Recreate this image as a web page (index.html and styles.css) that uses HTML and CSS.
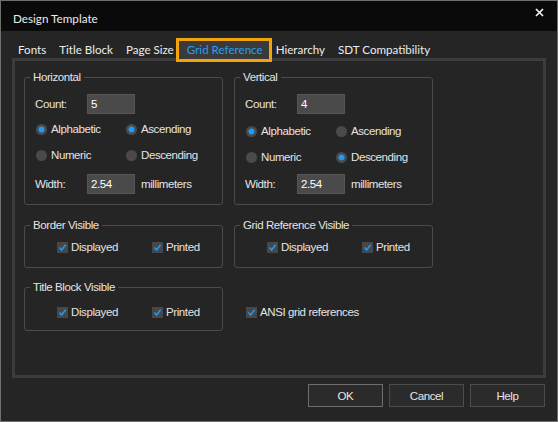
FILE: index.html
```html
<!DOCTYPE html>
<html lang="en">
<head>
    <meta charset="UTF-8">
    <title>Design Template</title>
    <link rel="stylesheet" href="styles.css">
</head>
<body>
    <div class="dialog">
        <div class="titlebar">
            <span class="title">Design Template</span>
            <svg class="close" width="9" height="9" viewBox="0 0 9 9">
                <path d="M1 1 L8 8 M8 1 L1 8" stroke="#f2f2f2" stroke-width="1.7"/>
            </svg>
        </div>

        <div class="tabs">
            <span class="tab">Fonts</span>
            <span class="tab">Title Block</span>
            <span class="tab">Page Size</span>
            <span class="tab active">Grid Reference</span>
            <span class="tab">Hierarchy</span>
            <span class="tab">SDT Compatibility</span>
        </div>

        <div class="panel">
            <div class="grid">
                <fieldset class="group axis">
                    <legend>Horizontal</legend>
                    <div class="field row-count">
                        <span class="lbl">Count:</span>
                        <span class="input">5</span>
                    </div>
                    <div class="options row-opt1">
                        <span class="radio checked">Alphabetic</span>
                        <span class="radio checked">Ascending</span>
                    </div>
                    <div class="options row-opt2">
                        <span class="radio">Numeric</span>
                        <span class="radio">Descending</span>
                    </div>
                    <div class="field row-width">
                        <span class="lbl">Width:</span>
                        <span class="input">2.54</span>
                        <span class="unit">millimeters</span>
                    </div>
                </fieldset>

                <fieldset class="group axis shift">
                    <legend>Vertical</legend>
                    <div class="field row-count">
                        <span class="lbl">Count:</span>
                        <span class="input">4</span>
                    </div>
                    <div class="options row-opt1">
                        <span class="radio checked">Alphabetic</span>
                        <span class="radio">Ascending</span>
                    </div>
                    <div class="options row-opt2">
                        <span class="radio">Numeric</span>
                        <span class="radio checked">Descending</span>
                    </div>
                    <div class="field row-width">
                        <span class="lbl">Width:</span>
                        <span class="input">2.54</span>
                        <span class="unit">millimeters</span>
                    </div>
                </fieldset>

                <fieldset class="group vis">
                    <legend>Border Visible</legend>
                    <div class="checks">
                        <span class="check"><svg viewBox="0 0 11 11"><path d="M2.5 5.5 L4.6 8 L8.6 2.8"/></svg>Displayed</span>
                        <span class="check"><svg viewBox="0 0 11 11"><path d="M2.5 5.5 L4.6 8 L8.6 2.8"/></svg>Printed</span>
                    </div>
                </fieldset>

                <fieldset class="group vis">
                    <legend>Grid Reference Visible</legend>
                    <div class="checks">
                        <span class="check"><svg viewBox="0 0 11 11"><path d="M2.5 5.5 L4.6 8 L8.6 2.8"/></svg>Displayed</span>
                        <span class="check"><svg viewBox="0 0 11 11"><path d="M2.5 5.5 L4.6 8 L8.6 2.8"/></svg>Printed</span>
                    </div>
                </fieldset>

                <fieldset class="group tb">
                    <legend>Title Block Visible</legend>
                    <div class="checks">
                        <span class="check"><svg viewBox="0 0 11 11"><path d="M2.5 5.5 L4.6 8 L8.6 2.8"/></svg>Displayed</span>
                        <span class="check"><svg viewBox="0 0 11 11"><path d="M2.5 5.5 L4.6 8 L8.6 2.8"/></svg>Printed</span>
                    </div>
                </fieldset>

                <div class="ansi">
                    <span class="check"><svg viewBox="0 0 11 11"><path d="M2.5 5.5 L4.6 8 L8.6 2.8"/></svg>ANSI grid references</span>
                </div>
            </div>
        </div>

        <div class="buttons">
            <button class="btn default">OK</button>
            <button class="btn">Cancel</button>
            <button class="btn">Help</button>
        </div>
    </div>
</body>
</html>
```

FILE: styles.css
```css
body {
    margin: 0;
    background-color: #252525;
    font-family: "Liberation Sans", Arial, sans-serif;
    font-size: 11.5px;
    letter-spacing: -0.4px;
    color: #e4e4e4;
}
.dialog {
    width: 558px;
    height: 422px;
    box-sizing: border-box;
    border: 1px solid #6f6f6f;
    background-color: #252525;
    display: flex;
    flex-direction: column;
}
.titlebar {
    height: 30px;
    flex: none;
    background-color: #0a0a0a;
    display: flex;
    align-items: flex-start;
    justify-content: space-between;
    padding: 0 13px 0 12px;
    font-family: Lato, "Noto Sans", sans-serif;
    font-size: 11.7px;
    letter-spacing: 0;
    color: #ececec;
}
.title {
    padding-top: 9px;
    line-height: 17px;
}
.close {
    margin-top: 7px;
}
.tabs {
    height: 17px;
    flex: none;
    display: flex;
    gap: 13px;
    padding: 10px 0 0 17px;
    font-family: Lato, "Noto Sans", sans-serif;
    font-size: 11.6px;
    letter-spacing: 0;
    color: #ececec;
}
.tab {
    height: 18px;
    line-height: 18px;
    white-space: nowrap;
}
.tab.active {
    position: relative;
    z-index: 1;
    padding: 0 6px 0 8px;
    margin: 0 -6px 0 -8px;
    background-color: #3a3a3a;
    color: #2b9ef2;
    outline: 3px solid #f2a40c;
}
.panel {
    height: 320px;
    flex: none;
    box-sizing: border-box;
    margin: 0 11px;
    border: 3px solid #3c3c3c;
    padding: 9px 0 0 9px;
}
.grid {
    display: grid;
    grid-template-columns: 199px 199px;
    column-gap: 11px;
    row-gap: 12px;
    align-items: start;
}
.group {
    margin: 0;
    min-width: 0;
    padding: 0 0 10px 10px;
    border: 1px solid #4b4b4b;
    border-radius: 3px;
}
.group legend {
    margin-left: -5px;
    padding: 0 3px;
    line-height: 14px;
    color: #e4e4e4;
}
.field {
    display: flex;
    align-items: center;
    height: 20px;
}
.lbl {
    width: 52px;
}
.input {
    width: 48px;
    height: 20px;
    box-sizing: border-box;
    background-color: #4a4a4a;
    border: 1px solid #565656;
    padding-left: 3px;
    line-height: 18px;
    color: #ffffff;
}
.unit {
    margin-left: 6px;
    white-space: nowrap;
}
.options {
    display: grid;
    grid-template-columns: 90px auto;
    height: 16px;
    align-items: center;
    padding-left: 1px;
}
.radio {
    display: flex;
    align-items: center;
    gap: 4px;
    white-space: nowrap;
}
.radio::before {
    content: "";
    width: 11px;
    height: 11px;
    border-radius: 50%;
    background-color: #4a4a4a;
}
.radio.checked::before {
    background: radial-gradient(circle, #1a9cff 0 2.6px, #4a4a4a 3.4px);
}
.row-count { margin-top: 10px; }
.row-opt1 { margin-top: 7px; }
.row-opt2 { margin-top: 10px; }
.row-width { margin-top: 11px; }
.shift .row-opt1 { margin-top: 9px; }
.shift .row-width { margin-top: 9px; }
.vis {
    margin-top: 1px;
    padding-bottom: 13px;
}
.vis .checks {
    margin-top: 8px;
}
.tb {
    padding-bottom: 11px;
}
.tb .checks {
    margin-top: 11px;
}
.checks {
    display: grid;
    grid-template-columns: 95px auto;
    height: 14px;
    align-items: center;
    padding-left: 22px;
}
.check {
    display: flex;
    align-items: center;
    gap: 3px;
    white-space: nowrap;
}
.check svg {
    width: 11px;
    height: 11px;
    flex: none;
    background-color: #474747;
}
.check path {
    fill: none;
    stroke: #1a9cff;
    stroke-width: 1.5;
}
.ansi {
    padding: 25px 0 0 12px;
    height: 14px;
    display: flex;
    align-items: center;
}
.buttons {
    display: flex;
    justify-content: flex-end;
    gap: 6px;
    padding: 6px 12px 0 0;
}
.btn {
    width: 75px;
    height: 23px;
    background-color: #2b2b2b;
    border: 1px solid #4c4c4c;
    color: #e6e6e6;
    font-family: inherit;
    font-size: 11.5px;
    letter-spacing: -0.4px;
    padding: 0;
}
.btn.default {
    border-color: #6e6e6e;
}
```
